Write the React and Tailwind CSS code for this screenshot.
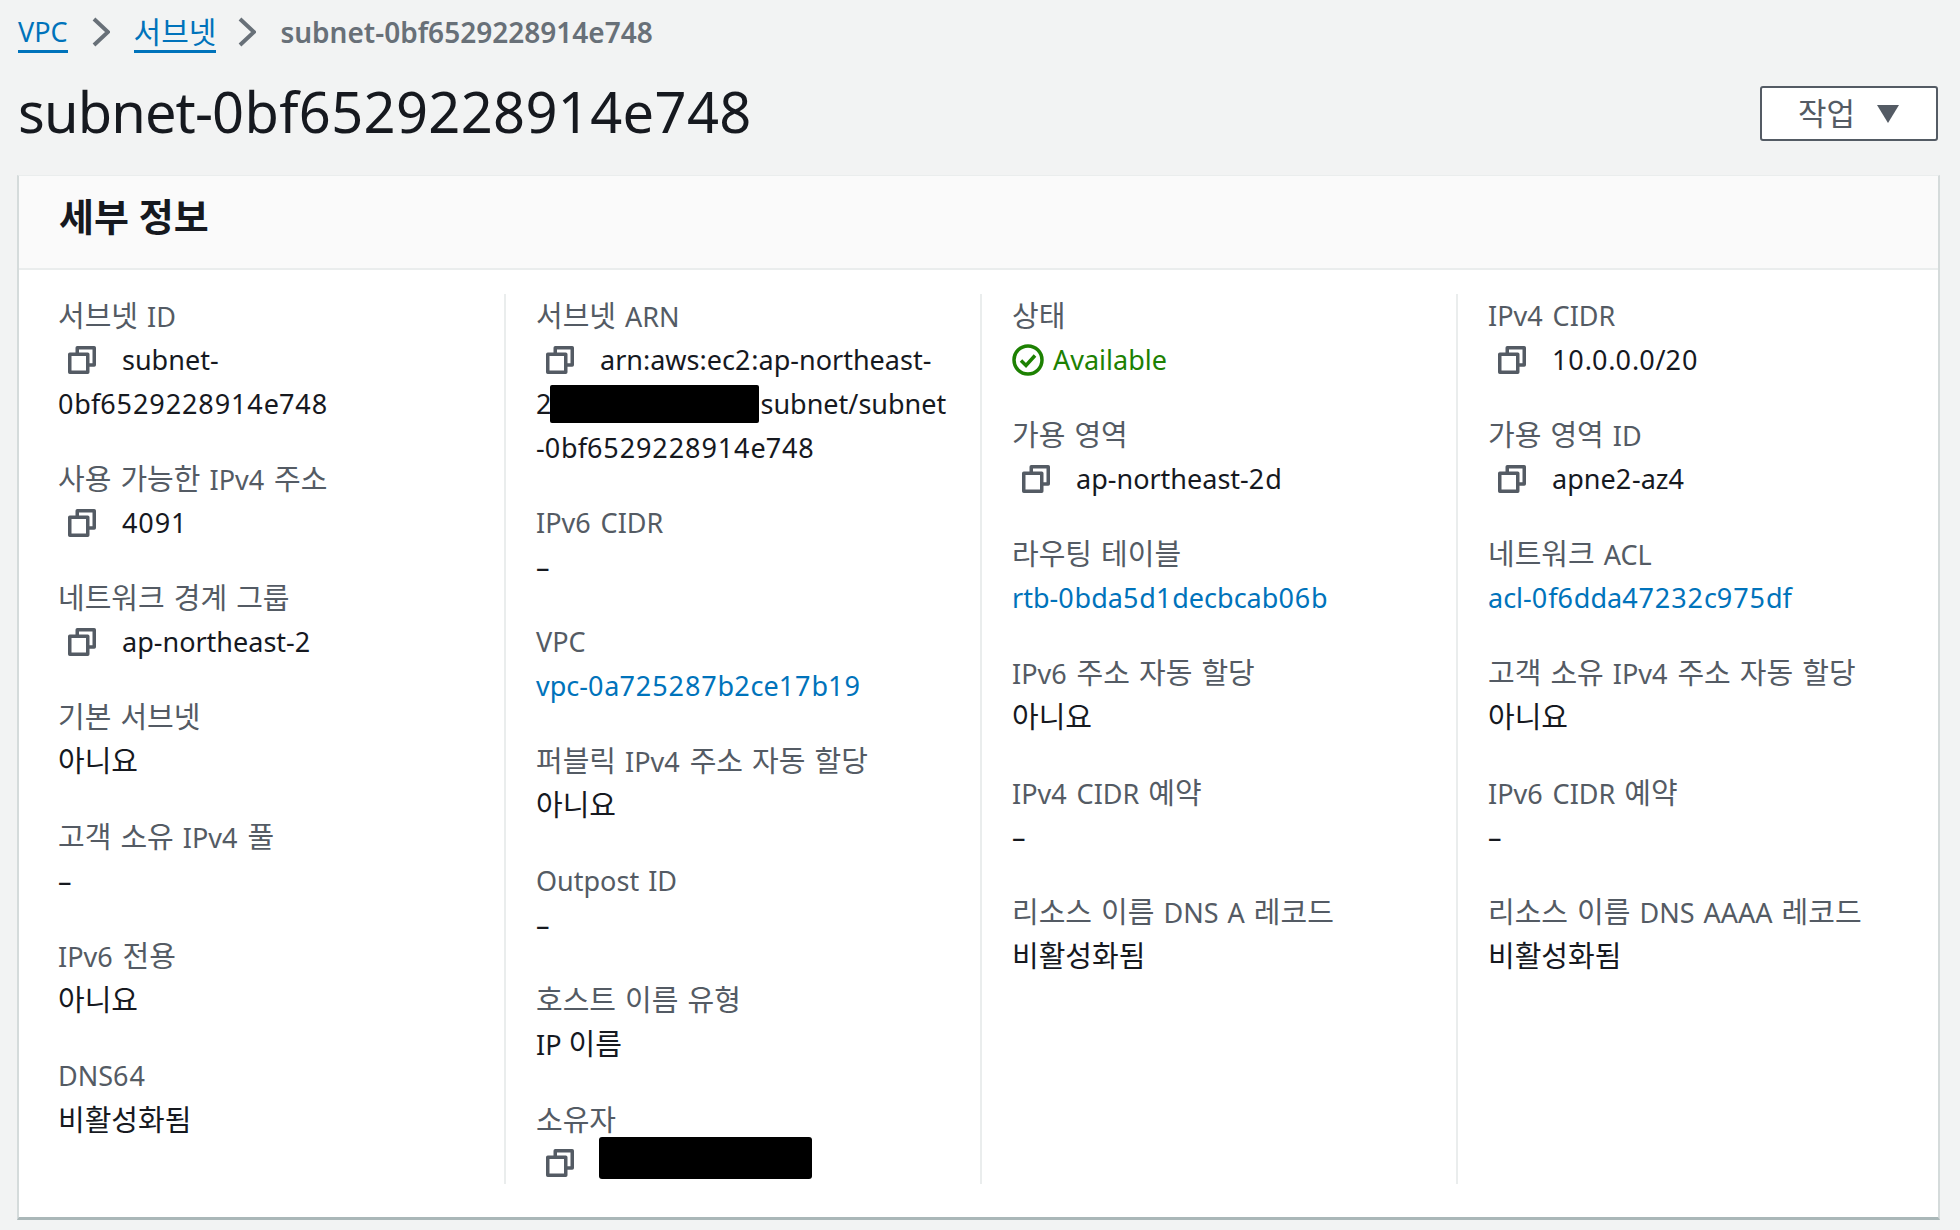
const FONT = 'font-["Noto_Sans","Noto_Sans_CJK_KR",sans-serif]';

function T({ children }) {
  const parts = String(children).split(/([\uAC00-\uD7A3]+|[0-9]+)/).filter(Boolean);
  return (
    <>
      {parts.map((p, i) => {
        if (/^[\uAC00-\uD7A3]/.test(p)) return <span key={i} className="text-[29px]">{p}</span>;
        if (/^[0-9]/.test(p)) return <span key={i} className="tracking-[0.9px]">{p}</span>;
        return <span key={i}>{p}</span>;
      })}
    </>
  );
}

function CopyIcon() {
  return (
    <svg width="28" height="28" viewBox="0 0 28 28" fill="none" stroke="#545b64" strokeWidth="3.5" className="shrink-0">
      <rect x="1.75" y="8.25" width="18" height="18" strokeLinejoin="round" />
      <path d="M9.25 8V1.75H26.25V19H20" strokeLinejoin="round" />
    </svg>
  );
}

function Copy({ children }) {
  return (
    <div className="flex items-center h-[44px] pl-[10px]">
      <CopyIcon />
      <span className="ml-[26px] whitespace-nowrap"><T>{children}</T></span>
    </div>
  );
}

function Link({ children }) {
  return <span className="text-[#0073bb]"><T>{children}</T></span>;
}

function Item({ label, children }) {
  return (
    <div className="mb-[31px]">
      <div className="h-[44px] leading-[44px] text-[#545b64] whitespace-nowrap [word-spacing:2px]"><T>{label}</T></div>
      <div className="leading-[44px] whitespace-nowrap">{typeof children === "string" ? <T>{children}</T> : children}</div>
    </div>
  );
}

function Chevron() {
  return (
    <svg width="18" height="30" viewBox="0 0 18 30" fill="none" stroke="#687078" strokeWidth="4">
      <path d="M2 2L16 15L2 28" />
    </svg>
  );
}

const Col = ({ children }) => (
  <div className="h-[890px] pl-[30px] border-l-2 border-[#eaeded] first:border-l-transparent first:pl-[28px]">{children}</div>
);

export default function App() {
  return (
    <div className={`${FONT} w-[1960px] h-[1230px] bg-[#f2f3f3] text-[#16191f] text-[27px] overflow-hidden`}>
      <div className="flex items-center h-[64px] pl-[18px] text-[27px]">
        <span className="text-[#0073bb] border-b-[3px] border-[#0073bb] leading-[36px] mt-[2px]">VPC</span>
        <span className="mx-[24px] flex"><Chevron /></span>
        <span className="text-[#0073bb] border-b-[3px] border-[#0073bb] leading-[36px] mt-[2px] text-[30px]">서브넷</span>
        <span className="ml-[22px] mr-[24px] flex"><Chevron /></span>
        <span className="text-[#687078] font-semibold text-[28px]">subnet-0bf6529228914e748</span>
      </div>
      <div className="flex items-center justify-between h-[111px] pl-[18px] pr-[22px]">
        <h1 className="text-[56px] leading-[70px] mb-[18px]">
          <span className="tracking-[-0.9px]">subnet-</span><span className="tracking-[0.35px]">0bf6529228914e748</span>
        </h1>
        <button className="flex items-center justify-end w-[178px] h-[55px] mb-[12px] pr-[37px] border-2 border-[#545b64] rounded-[3px] bg-white text-[#545b64]">
          <span className="text-[31px]">작업</span>
          <svg width="22" height="18" viewBox="0 0 22 18" className="ml-[22px]"><path d="M0 0H22L11 18Z" fill="#545b64" /></svg>
        </button>
      </div>
      <div className="ml-[17px] w-[1923px] h-[1045px] bg-white border-l-2 border-r-2 border-[#d5dbdb] border-b-[3px] border-b-[#aab7b8] border-t border-t-[#eaeded]">
        <div className="h-[94px] bg-[#fafafa] border-b-2 border-[#eaeded] pl-[40px] flex items-center pb-[13px]">
          <h2 className="text-[38px] font-semibold leading-[44px]">세부 정보</h2>
        </div>
        <div className="grid grid-cols-4 w-[1904px] ml-[9px] mt-[24px]">
          <Col>
            <Item label="서브넷 ID">
              <Copy>subnet-</Copy>
              <div><T>0bf6529228914e748</T></div>
            </Item>
            <Item label="사용 가능한 IPv4 주소"><Copy>4091</Copy></Item>
            <Item label="네트워크 경계 그룹"><Copy>ap-northeast-2</Copy></Item>
            <Item label="기본 서브넷">아니요</Item>
            <Item label="고객 소유 IPv4 풀">–</Item>
            <Item label="IPv6 전용">아니요</Item>
            <Item label="DNS64">비활성화됨</Item>
          </Col>
          <Col>
            <Item label="서브넷 ARN">
              <Copy>arn:aws:ec2:ap-northeast-</Copy>
              <div className="flex items-center h-[44px]">
                <span>2</span>
                <span className="ml-[-1px] w-[209px] h-[38px] bg-black rounded-[2px]" />
                <span className="ml-[1px]">subnet/subnet</span>
              </div>
              <div><T>-0bf6529228914e748</T></div>
            </Item>
            <Item label="IPv6 CIDR">–</Item>
            <Item label="VPC"><Link>vpc-0a725287b2ce17b19</Link></Item>
            <Item label="퍼블릭 IPv4 주소 자동 할당">아니요</Item>
            <Item label="Outpost ID">–</Item>
            <Item label="호스트 이름 유형">IP 이름</Item>
            <Item label="소유자">
              <div className="flex items-start h-[44px] pl-[10px]">
                <span className="mt-[7px] flex"><CopyIcon /></span>
                <span className="ml-[25px] mt-[-5px] w-[213px] h-[42px] bg-black rounded-[3px]" />
              </div>
            </Item>
          </Col>
          <Col>
            <Item label="상태">
              <div className="flex items-center h-[44px] text-[#1d8102]">
                <svg width="32" height="32" viewBox="0 0 32 32" fill="none" stroke="#1d8102" strokeWidth="3.5">
                  <circle cx="16" cy="16" r="14" />
                  <path d="M9 16.5L14 21.5L23 11.5" />
                </svg>
                <span className="ml-[9px]">Available</span>
              </div>
            </Item>
            <Item label="가용 영역"><Copy>ap-northeast-2d</Copy></Item>
            <Item label="라우팅 테이블"><Link>rtb-0bda5d1decbcab06b</Link></Item>
            <Item label="IPv6 주소 자동 할당">아니요</Item>
            <Item label="IPv4 CIDR 예약">–</Item>
            <Item label="리소스 이름 DNS A 레코드">비활성화됨</Item>
          </Col>
          <Col>
            <Item label="IPv4 CIDR"><Copy>10.0.0.0/20</Copy></Item>
            <Item label="가용 영역 ID"><Copy>apne2-az4</Copy></Item>
            <Item label="네트워크 ACL"><Link>acl-0f6dda47232c975df</Link></Item>
            <Item label="고객 소유 IPv4 주소 자동 할당">아니요</Item>
            <Item label="IPv6 CIDR 예약">–</Item>
            <Item label="리소스 이름 DNS AAAA 레코드">비활성화됨</Item>
          </Col>
        </div>
      </div>
    </div>
  );
}
